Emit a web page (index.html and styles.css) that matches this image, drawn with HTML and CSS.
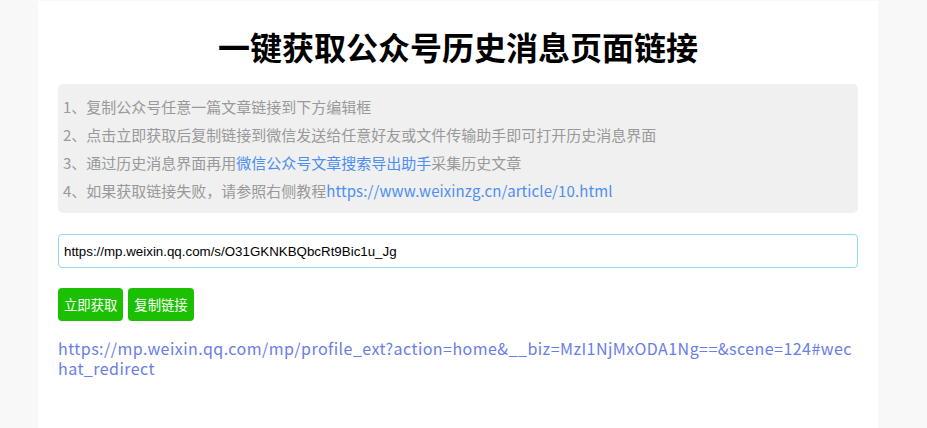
FILE: index.html
```html
<!DOCTYPE html>
<html lang="zh-CN">
<head>
    <meta charset="UTF-8">
    <meta name="viewport" content="width=device-width, initial-scale=1.0">
    <title>一键获取公众号历史消息页面链接</title>
    <link rel="stylesheet" href="styles.css">
</head>
<body>
    <div class="container">
        <h1>一键获取公众号历史消息页面链接</h1>
        <div class="tips">
            <p>1、复制公众号任意一篇文章链接到下方编辑框</p>
            <p>2、点击立即获取后复制链接到微信发送给任意好友或文件传输助手即可打开历史消息界面</p>
            <p>3、通过历史消息界面再用<a href="#">微信公众号文章搜索导出助手</a>采集历史文章</p>
            <p>4、如果获取链接失败，请参照右侧教程<a href="#" class="tutorial">https://www.weixinzg.cn/article/10.html</a></p>
        </div>
        <input type="text" id="url" class="url-input" value="https://mp.weixin.qq.com/s/O31GKNKBQbcRt9Bic1u_Jg">
        <div class="actions">
            <button id="getBtn">立即获取</button>
            <button id="copyBtn">复制链接</button>
        </div>
        <a class="result" id="result" href="#">https://mp.weixin.qq.com/mp/profile_ext?action=home&amp;__biz=MzI1NjMxODA1Ng==&amp;scene=124#wechat_redirect</a>
    </div>
</body>
</html>
```

FILE: styles.css
```css
* {
    margin: 0;
    padding: 0;
    box-sizing: border-box;
}

body {
    background-color: #f8f8f8;
    font-family: 'Noto Sans CJK SC', 'Microsoft YaHei', sans-serif;
    min-height: 100vh;
    padding-right: 11px;
}

.container {
    background-color: white;
    width: 840px;
    min-height: 427px;
    margin: 1px auto 0;
    padding: 0 20px 30px;
}

h1 {
    text-align: center;
    font-size: 32px;
    font-weight: 700;
    line-height: 40px;
    color: #000;
    padding-top: 25px;
    margin-bottom: 18px;
}

.tips {
    background-color: #f0f0f0;
    border-radius: 5px;
    padding: 9px 5px 8px;
}

.tips p {
    font-size: 15px;
    line-height: 28px;
    color: #999;
}

.tips a {
    color: #4d8ff0;
    text-decoration: none;
}

.tips .tutorial {
    letter-spacing: 0.1px;
}

.url-input {
    display: block;
    width: 100%;
    height: 34px;
    margin-top: 21px;
    padding: 0 5px;
    border: 1px solid #8ddcf2;
    border-radius: 4px;
    font-family: 'Liberation Sans', Arial, sans-serif;
    font-size: 13.33px;
    color: #000;
    outline: none;
}

.actions {
    display: flex;
    gap: 5px;
    margin-top: 20px;
}

.actions button {
    height: 33px;
    padding: 0 6px;
    background-color: #1bc100;
    color: white;
    border: none;
    border-radius: 4px;
    font-family: 'Noto Sans CJK SC', 'Microsoft YaHei', sans-serif;
    font-size: 13.33px;
    cursor: pointer;
}

.result {
    display: block;
    margin-top: 17px;
    font-size: 16px;
    line-height: 20px;
    letter-spacing: 0.45px;
    color: #6a7de6;
    text-decoration: none;
    word-break: break-all;
}
```
